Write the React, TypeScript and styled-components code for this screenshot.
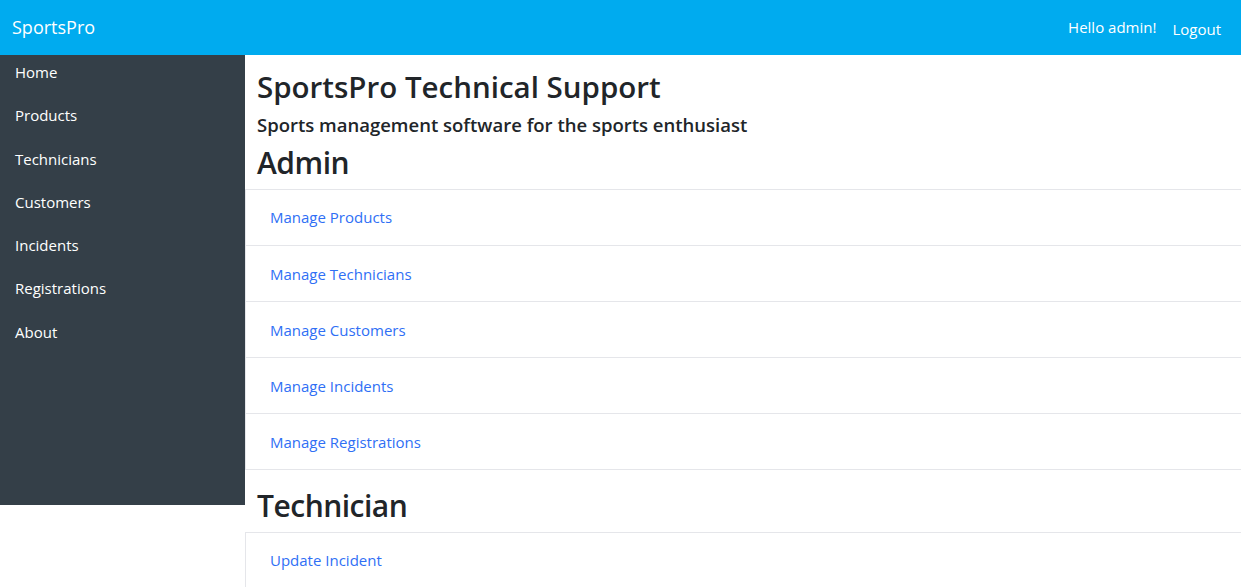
import React from "react";
import styled, { createGlobalStyle } from "styled-components";

const Global = createGlobalStyle`
  html, body { margin: 0; padding: 0; background: #fff; }
  body { font-family: "Open Sans", "Noto Sans", sans-serif; color: #212529; overflow: hidden; }
  * { box-sizing: border-box; }
`;

const Header = styled.header`
  height: 55px;
  background: #00abef;
  display: flex;
  align-items: center;
  justify-content: space-between;
  padding: 0 20px 0 12px;
  color: #fff;
`;

const Brand = styled.a`
  font-size: 18px;
  color: #fff;
  text-decoration: none;
  position: relative;
  top: -1px;
`;

const HeaderRight = styled.div`
  display: flex;
  align-items: center;
  gap: 16px;
  font-size: 15px;
`;

const HeaderText = styled.span<{ $drop?: boolean }>`
  color: #fff;
  position: relative;
  top: ${(p) => (p.$drop ? "1px" : "-1px")};
`;

const Body = styled.div`
  display: flex;
  align-items: flex-start;
`;

const Sidebar = styled.nav`
  width: 245px;
  flex: none;
  height: 450px;
  background: #343f48;
`;

const SideItem = styled.a`
  display: block;
  color: #fff;
  font-size: 15px;
  line-height: 23px;
  padding: 6px 15px 14px;
  text-decoration: none;
  height: 43.3px;
`;

const Main = styled.main`
  flex: 1;
  min-width: 0;
  overflow: hidden;
`;

const Title = styled.h1`
  margin: 12px 0 0 12px;
  font-size: 29.5px;
  font-weight: 600;
  line-height: 40px;
  letter-spacing: 0;
`;

const Subtitle = styled.h4`
  margin: 5px 0 0 12px;
  font-size: 18.5px;
  font-weight: 600;
  line-height: 26px;
`;

const SectionTitle = styled.h2<{ $top?: number }>`
  margin: ${(p) => p.$top ?? 0}px 0 5px 12px;
  font-size: 30px;
  font-weight: 600;
  line-height: 42px;
  letter-spacing: -0.5px;
`;

const ListGroup = styled.div`
  display: flex;
  flex-direction: column;
  margin-right: -2px;
  border: 1px solid #e5e6ea;
  border-right: none;
`;

const ListItem = styled.a`
  display: block;
  height: 56px;
  padding: 17px 24px 15px;
  font-size: 15px;
  line-height: 22px;
  color: #2f6ff5;
  text-decoration: none;
  border-top: 1px solid #e5e6ea;
  &:first-child { border-top: none; height: 55px; padding-top: 16px; }
`;

const sideItems = ["Home", "Products", "Technicians", "Customers", "Incidents", "Registrations", "About"];
const adminItems = ["Manage Products", "Manage Technicians", "Manage Customers", "Manage Incidents", "Manage Registrations"];

export default function App() {
  return (
    <>
      <Global />
      <Header>
        <Brand href="#">SportsPro</Brand>
        <HeaderRight>
          <HeaderText>Hello admin!</HeaderText>
          <HeaderText $drop>Logout</HeaderText>
        </HeaderRight>
      </Header>
      <Body>
        <Sidebar>
          {sideItems.map((s) => (
            <SideItem key={s} href="#">{s}</SideItem>
          ))}
        </Sidebar>
        <Main>
          <Title>SportsPro Technical Support</Title>
          <Subtitle>Sports management software for the sports enthusiast</Subtitle>
          <SectionTitle $top={4}>Admin</SectionTitle>
          <ListGroup>
            {adminItems.map((s) => (
              <ListItem key={s} href="#">{s}</ListItem>
            ))}
          </ListGroup>
          <SectionTitle $top={15}>Technician</SectionTitle>
          <ListGroup>
            <ListItem href="#">Update Incident</ListItem>
          </ListGroup>
        </Main>
      </Body>
    </>
  );
}
